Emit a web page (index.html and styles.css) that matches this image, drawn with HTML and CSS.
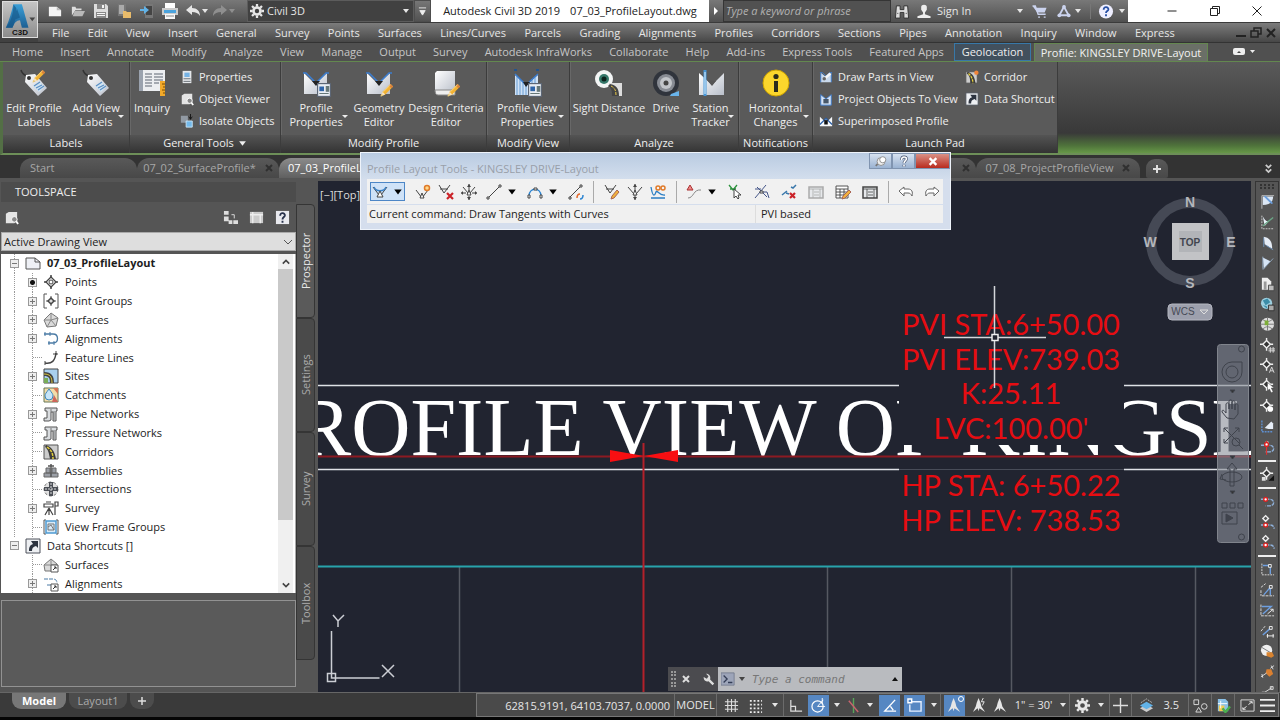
FILE: index.html
```html
<!DOCTYPE html>
<html lang="en">
<head>
<meta charset="utf-8">
<title>Autodesk Civil 3D 2019</title>
<link rel="stylesheet" href="styles.css">
</head>
<body>
<svg class="defs" aria-hidden="true">
  <defs>
    <linearGradient id="gw" x1="0" y1="0" x2="1" y2="1"><stop offset="0" stop-color="#fff"/><stop offset="1" stop-color="#b9bfca"/></linearGradient>
    <linearGradient id="gb" x1="0" y1="0" x2="0" y2="1"><stop offset="0" stop-color="#3ba0d8"/><stop offset="1" stop-color="#1d5f93"/></linearGradient>
  </defs>
  <symbol id="new" viewBox="0 0 16 16"><path d="M1 3h9l5 4v7H1z" fill="#f4f4f4"/><path d="M10 3v4h5" fill="#bbb"/></symbol>
  <symbol id="open" viewBox="0 0 16 16"><path d="M1 13V3h4l1 2h6v2H5z" fill="#ddd"/><path d="M4 8h12l-3 6H2z" fill="#b8b8b8"/></symbol>
  <symbol id="save" viewBox="0 0 16 16"><path d="M1 1h12l2 2v12H1z" fill="#ddd"/><path d="M4 1h8v5H4zM3 9h10v6H3z" fill="#888"/><path d="M9 2h2v3H9zM4 10h8v1H4zM4 12h8v1H4z" fill="#f4f4f4"/></symbol>
  <symbol id="saveas" viewBox="0 0 16 16"><path d="M2 1h8v12H2z" fill="#777"/><path d="M3 2h5v9H3z" fill="#aaa"/><path d="M7 8h3l1 1h4v6H7z" fill="#e8bb6b"/></symbol>
  <symbol id="mobile" viewBox="0 0 16 16"><path d="M6 1h8v14H6z" fill="#777"/><path d="M7 3h6v9H7z" fill="#444"/><path d="M1 6h4V3l5 4-5 4V8H1z" fill="#62b2e6"/></symbol>
  <symbol id="print" viewBox="0 0 16 16"><path d="M3 0h10v5H3z" fill="#fff"/><path d="M0 5h16v7H0z" fill="#ccc"/><path d="M2 7h12v3H2z" fill="#4ba3dd"/><path d="M3 11h10v5H3z" fill="#f7f7f7"/><path d="M4 13h8" stroke="#888"/></symbol>
  <symbol id="undo" viewBox="0 0 16 16"><path d="M1 7l6-5v3c5 0 8 3 8 8-2-3-4-4-8-4v3z" fill="currentColor"/></symbol>
  <symbol id="caret" viewBox="0 0 8 8"><path d="M1 2h6L4 6z" fill="currentColor"/></symbol>
  <symbol id="gear" viewBox="0 0 16 16"><circle cx="8" cy="8" r="4" fill="none" stroke="currentColor" stroke-width="3"/><path d="M8 0v3M8 13v3M0 8h3M13 8h3M2.300 2.300l2 2M11.700 11.700l2 2M2.300 13.700l2-2M11.700 4.300l2-2" stroke="currentColor" stroke-width="2.600"/></symbol>
  <symbol id="tag" viewBox="0 0 28 28"><path d="M1 1c1 4 3 5 6 6" fill="none" stroke="#333" stroke-width="1.500"/><path d="M6 6l9-1 12 14-9 8L5 13z" fill="url(#gw)"/><circle cx="9" cy="9" r="2" fill="#333"/><path d="M13 17l7-4 4 5-5 5z" fill="#cfe3f2"/><path d="M14 17l6-4M16 19l6-3M18 21l6-4" stroke="#5b8fc4" stroke-width="1.200"/></symbol>
  <symbol id="pencil" viewBox="0 0 16 16"><path d="M1 15l2-5 9-9 3 3-9 9z" fill="#f2b233"/><path d="M1 15l2-5 3 3z" fill="#f8e2bb"/><path d="M12 1l3 3-2 2-3-3z" fill="#d9803c"/><path d="M1 15l1-2 1 1zM4 10l8-8" fill="#222" stroke="#fbdc85"/></symbol>
  <symbol id="inquiry" viewBox="0 0 28 28"><rect x="1" y="1" width="26" height="21" fill="#eceef1"/><path d="M1 1h4v21H1z" fill="#9aa2ae"/><path d="M7 5h7M16 5h9M7 8h7M16 8h9M7 11h7M16 11h9M7 14h7M16 14h5M7 17h7" stroke="#5d6572" stroke-width="1.200"/><path d="M22 12h5v15h-5z" fill="#f1a92b"/><path d="M24 15h3M25 18h2M24 21h3M25 24h2" stroke="#7c4c00"/></symbol>
  <symbol id="prof" viewBox="0 0 28 28"><path d="M2 4l11 11L25 4v21H2z" fill="url(#gw)"/><path d="M1 4h3l10 10L24 4h3" fill="none" stroke="#3b7dd0" stroke-width="1.500"/><path d="M10 12l4 5 4-5" fill="#222"/></symbol>
  <symbol id="props" viewBox="0 0 12 12"><rect x=".5" y=".5" width="11" height="11" fill="#e9edf3" stroke="#5c6675"/><path d="M2 3h4v4H2z" fill="#2f64a8"/><path d="M8 3h2v4H8zM2 9h8" fill="#677" stroke="#677"/></symbol>
  <symbol id="profview" viewBox="0 0 28 28"><path d="M2 6l11 10L25 6v20H2z" fill="#cfe1f5"/><path d="M4 8v18M7 10v16M10 13v13M13 16v10M16 13v13M19 10v16M22 8v18" stroke="#8bb4de" stroke-width="1.500"/><path d="M2 5l11 11L25 5" fill="none" stroke="#3b7dd0" stroke-width="1.500"/><path d="M1 1h3M23 1h3" stroke="#23548e" stroke-width="2"/><path d="M10 13l3 5 4-5" fill="#222"/></symbol>
  <symbol id="book" viewBox="0 0 28 28"><path d="M5 2h18v22H6l-3-3V4z" fill="url(#gw)"/><path d="M3 21h20v5H6c-2 0-3-2-3-5z" fill="#eee" stroke="#888"/></symbol>
  <symbol id="eye" viewBox="0 0 28 28"><circle cx="9" cy="10" r="9" fill="#f3f5f5"/><circle cx="9" cy="10" r="5" fill="#36786a"/><circle cx="9" cy="10" r="2.500" fill="#0c211c"/><path d="M14 14l13 0v13h-7c0-5-2-8-6-9z" fill="#ddd"/><path d="M15 15c6 1 9 4 9 12h-7c0-5 0-7-4-10z" fill="#444"/><path d="M16 17c4 2 5 5 5 9" stroke="#e8c847" fill="none" stroke-dasharray="3 1"/></symbol>
  <symbol id="drive" viewBox="0 0 28 28"><circle cx="14" cy="14" r="13" fill="#30343c"/><circle cx="14" cy="14" r="9" fill="#888c94"/><circle cx="14" cy="14" r="6" fill="#c2c5ca"/><circle cx="14" cy="14" r="2.500" fill="#444"/><path d="M19 25l8-3v5h-9z" fill="#69b4eb"/></symbol>
  <symbol id="station" viewBox="0 0 28 28"><path d="M2 4l13 12L27 4v22H2z" fill="url(#gw)"/><path d="M8 1v26" stroke="#4796d8" stroke-width="3"/><path d="M8 3v22" stroke="#e5f5ff"/><path d="M10 11l5 6 4-5" fill="#555"/></symbol>
  <symbol id="info" viewBox="0 0 28 28"><circle cx="14" cy="14" r="13" fill="#fbd62c" stroke="#cfa400"/><circle cx="14" cy="7.500" r="2.600" fill="#2b2b1c"/><path d="M12 12h4v11h-4z" fill="#2b2b1c"/></symbol>
  <symbol id="sprops" viewBox="0 0 16 16"><path d="M3 1h10v14H3z" fill="#e4e7ea"/><path d="M5 3h6v5H5z" fill="#75b2e4"/><path d="M4 10h8M4 13h8" stroke="#5d646c"/></symbol>
  <symbol id="sview" viewBox="0 0 16 16"><path d="M2 4l3-2h9v9l-3 3H2z" fill="#e4e4e4"/><circle cx="11" cy="10" r="3" fill="#888" stroke="#fff"/><path d="M13 12l2 3" stroke="#fff" stroke-width="2"/></symbol>
  <symbol id="siso" viewBox="0 0 16 16"><path d="M1 2h8v8H1z" fill="#929aa3"/><path d="M7 8h7v7H7z" fill="#73b9ea" stroke="#cde8fa"/><path d="M12 0v6M10 3l2 3 2-3" stroke="#111" fill="none"/></symbol>
  <symbol id="sparts" viewBox="0 0 16 16"><path d="M2 3l6 5 6-5v11H2z" fill="#c9d9ec"/><path d="M1 3h3l4 4 4-4h3M2 4v10M14 4v10" stroke="#3b7dd0" fill="none"/><path d="M5 11l8-7" stroke="#f4f4f4" stroke-width="3"/><circle cx="6" cy="10" r="2" fill="#666"/></symbol>
  <symbol id="sproj" viewBox="0 0 16 16"><path d="M2 3l6 5 6-5v12H2z" fill="#d6e3f4" stroke="#3b7dd0"/><path d="M5 8h6v5H5z" fill="#48586a"/></symbol>
  <symbol id="ssup" viewBox="0 0 16 16"><path d="M1 3l5 5 2-3 2 3 5-5v11H1z" fill="#f6f8fa"/><path d="M1 12l7-7 7 7" stroke="#2a5fa8" stroke-width="1.500" fill="none"/><path d="M6 7h4v5H6z" fill="#111"/></symbol>
  <symbol id="road" viewBox="0 0 16 16"><path d="M1 1h14v14H1z" fill="#ccc" stroke="#555"/><path d="M3 1c6 2 9 7 10 14H7C6 9 5 5 2 3z" fill="#3c3c3c"/><path d="M4 3c4 3 6 6 6 12" stroke="#e5cf3a" fill="none" stroke-dasharray="3 1" stroke-width="1.500"/></symbol>
  <symbol id="roadnew" viewBox="0 0 16 16"><path d="M1 2h13v13H1z" fill="#ccc" stroke="#555"/><path d="M3 2c6 2 8 6 9 13H6C6 9 5 6 2 4z" fill="#3c3c3c"/><path d="M4 4c3 3 5 6 5 11" stroke="#e5cf3a" fill="none" stroke-dasharray="3 1" stroke-width="1.500"/><circle cx="13" cy="3" r="2.500" fill="#f0843a"/></symbol>
  <symbol id="shortcut" viewBox="0 0 16 16"><path d="M1 1h14v14H1z" fill="#eef0f3" stroke="#4c515a"/><path d="M6 3h7v7l-2-2c-3 1-4 2-4 5H4c0-4 1-6 4-7z" fill="#2d3440"/></symbol>
  <symbol id="points" viewBox="0 0 16 16"><path d="M8 1v4M8 11v4M1 8h4M11 8h4" stroke="#444" stroke-width="1.500"/><path d="M8 3l5 5-5 5-5-5z" fill="#fff" stroke="#444" stroke-width="1.300"/><circle cx="8" cy="8" r="2" fill="none" stroke="#444"/></symbol>
  <symbol id="pgroup" viewBox="0 0 16 16"><path d="M4 1H1v14h3M12 1h3v14h-3M8 3v10M3 8h10" fill="none" stroke="#555"/><path d="M8 5l3 3-3 3-3-3z" fill="#ddd" stroke="#444" stroke-width="1.500"/></symbol>
  <symbol id="surf" viewBox="0 0 16 16"><path d="M8 1l7 5-2 8-9 1-3-7z" fill="#dadada" stroke="#777"/><path d="M8 1v7l7-2M8 8l5 6M8 8l-4 7M8 8H1" stroke="#888" fill="none"/></symbol>
  <symbol id="align" viewBox="0 0 16 16"><path d="M1 3h9c6 0 6 9 0 9H5" fill="none" stroke="#4b7ba5" stroke-width="1.300"/><path d="M2 1v4M7 1v4M6 10v4M11 10v4" stroke="#4b7ba5"/></symbol>
  <symbol id="feat" viewBox="0 0 16 16"><path d="M2 13c7 1 10-2 11-10" fill="none" stroke="#444" stroke-width="1.500"/><path d="M10 4h5M13 1v4M2 11v4" stroke="#444"/></symbol>
  <symbol id="sites" viewBox="0 0 16 16"><path d="M1 1h14v14H1z" fill="#a9d0ef" stroke="#444"/><path d="M1 4c8 0 10 4 10 11H7c0-5-1-7-6-7z" fill="#444"/><path d="M1 6c6 0 8 3 8 9" fill="none" stroke="#dbc73e"/><path d="M1 10h4v5H1z" fill="#79ad58"/></symbol>
  <symbol id="catch" viewBox="0 0 16 16"><path d="M1 1h14v14H1z" fill="#f3dca9" stroke="#675"/><path d="M10 1h5v6z" fill="#d57656"/><path d="M11 8l4 7h-6z" fill="#ce665b"/><path d="M6 2c3 4 4 5 4 7a4 4 0 0 1-8 0c0-2 1-3 4-7z" fill="#c6e5f8" stroke="#3b86bd"/></symbol>
  <symbol id="pipe" viewBox="0 0 16 16"><path d="M2 2h12v3h-1v10h-3V6H8v8l-2 1H1v-3h3V5H2z" fill="#d9dcdf" stroke="#555"/><path d="M8 3v3M11 5v9" stroke="#777"/></symbol>
  <symbol id="assembly" viewBox="0 0 16 16"><path d="M1 10h14v4H1zM3 5h4v5H3zM9 5h4v5H9z" fill="#9b9fa6" stroke="#666"/><path d="M8 1v13M5 3h6" stroke="#555" stroke-width="1.500"/></symbol>
  <symbol id="cross" viewBox="0 0 16 16"><circle cx="8" cy="8" r="7" fill="#e0e0e0" stroke="#777" stroke-dasharray="3 2"/><path d="M6 1h4v5h5v4h-5v5H6v-5H1V6h5z" fill="#4b4f56"/><path d="M8 2v12M2 8h12" stroke="#ddd" stroke-dasharray="2 1"/></symbol>
  <symbol id="survey" viewBox="0 0 16 16"><path d="M1 4h9v3H1zM6 8l-4 7M6 8v7M6 8l4 7M12 2h3v4h-3zM12 6v9M3 2h5" fill="none" stroke="#444" stroke-width="1.200"/></symbol>
  <symbol id="frame" viewBox="0 0 16 16"><path d="M3 1H1v14h2M13 1h2v14h-2" fill="none" stroke="#555"/><path d="M3 2h10v12H3z" fill="#d8eaf7" stroke="#4d9ad2" stroke-width="1.500"/><path d="M5 5h6v6H5zM5 8l3-2 3 5" fill="none" stroke="#777"/></symbol>
  <symbol id="doc" viewBox="0 0 16 16"><path d="M1 3h9l5 4v7H1z" fill="#eef0f5" stroke="#555"/><path d="M10 3v4h5" fill="none" stroke="#555"/></symbol>
  <symbol id="surfs" viewBox="0 0 16 16"><path d="M1 8l7-6 6 5v7H2z" fill="#dadada" stroke="#777"/><path d="M8 2v6M1 8h13" stroke="#888"/><path d="M8 8h7v7H8z" fill="#fff" stroke="#555"/><path d="M10 13l3-3M11 10h2v2" stroke="#333" fill="none"/></symbol>
  <symbol id="aligns" viewBox="0 0 16 16"><path d="M1 3h9c3 0 4 2 4 4M4 9h4" fill="none" stroke="#4b7ba5" stroke-dasharray="4 1"/><path d="M8 8h7v7H8z" fill="#fff" stroke="#555"/><path d="M10 13l3-3M11 10h2v2" stroke="#333" fill="none"/></symbol>
  <!-- profile layout tool icons -->
  <symbol id="x" viewBox="0 0 8 8"><path d="M1 1l6 6M7 1L1 7" stroke="currentColor" stroke-width="2"/></symbol>
  <symbol id="veec" viewBox="0 0 16 16"><path d="M1 3l6 8 2 0 6-8" fill="none" stroke="#444"/><path d="M2 3c2 5 10 5 12 0" fill="none" stroke="#3a80c5" stroke-width="1.500"/><path d="M8 7l3 6H5z" fill="#fff" stroke="#444"/></symbol>
  <symbol id="veemove" viewBox="0 0 16 16"><path d="M2 3l5 6h2l5-6M8 0v6M8 12v4M0 9h5M11 9h5" fill="none" stroke="#444"/><path d="M8 6l2 5H6z" fill="#fff" stroke="#444"/><path d="M6 3l2-3 2 3zM6 13l2 3 2-3zM2 7v4L0 9zM14 7v4l2-2z" fill="#444"/></symbol>
  <symbol id="line" viewBox="0 0 16 16"><path d="M2 14L14 2" stroke="#444"/><path d="M1 13h2v2H1zM13 1h2v2h-2z" fill="#fff" stroke="#444"/></symbol>
  <symbol id="arc" viewBox="0 0 16 16"><path d="M2 12C2 3 14 3 14 12" fill="none" stroke="#2b84d1" stroke-width="1.500"/><path d="M1 11h2v3H1zM13 11h2v3h-2zM7 4h3v2H7z" fill="#fff" stroke="#444"/></symbol>
  <symbol id="linec" viewBox="0 0 16 16"><path d="M1 14L14 1" stroke="#444"/><path d="M1 13h2v2H1zM12 1h2v2h-2z" fill="#fff" stroke="#444"/><path d="M9 14c0-3 1-4 3-4" stroke="#e46a2d" stroke-width="1.500" fill="none"/><path d="M12 15c3 0 3-2 3-4" stroke="#2b84d1" stroke-width="1.500" fill="none"/></symbol>
  <symbol id="wave" viewBox="0 0 16 16"><path d="M1 3c2 12 4 8 5 5s3 4 9 3M1 14h14" fill="none" stroke="#2b7ec4" stroke-width="1.300"/><circle cx="8" cy="4" r="2" fill="none" stroke="#e07a29" stroke-width="1.500"/><circle cx="13" cy="4" r="2" fill="none" stroke="#e07a29" stroke-width="1.500"/></symbol>
  <symbol id="tri" viewBox="0 0 16 16"><path d="M4 1l3 5H1z" fill="#e88" stroke="#a33"/><path d="M2 14C8 14 7 5 15 6" fill="none" stroke="#888"/></symbol>
  <symbol id="pick" viewBox="0 0 16 16"><path d="M2 1l4 5 4-5M3 5h6" fill="none" stroke="#2b923c" stroke-width="1.300"/><path d="M7 5v9l2-2 2 3 1-1-1-3h3z" fill="#fff" stroke="#444"/></symbol>
  <symbol id="split" viewBox="0 0 16 16"><path d="M1 14L12 1M1 5h6M6 8h7l2 6M3 3l10 10" fill="none" stroke="#458"/><path d="M6 7h3v2H6z" fill="#fff" stroke="#444"/></symbol>
  <symbol id="delx" viewBox="0 0 16 16"><path d="M1 11l5-4M10 3l2 1 3-3M5 9l3 1" fill="none" stroke="#3a78ab" stroke-width="1.500"/><path d="M9 9l5 5M14 9l-5 5" stroke="#cb2228" stroke-width="2.200"/></symbol>
  <symbol id="panel" viewBox="0 0 16 16"><path d="M1 3h14v11H1z" fill="#e7e9ec" stroke="currentColor" stroke-width="1.500"/><path d="M1 5h14M12 5v9M5 5v9M6 8h5M6 11h5" fill="none" stroke="currentColor" stroke-width=".8"/></symbol>
  <symbol id="table" viewBox="0 0 16 16"><path d="M1 2h12v12H1zM1 5h12M5 5v9M9 5v9M1 8h12M1 11h12" fill="#fff" stroke="#444" stroke-width=".9"/><path d="M7 15l1-3 6-6 2 2-6 6z" fill="#f1b13b" stroke="#a65"/></symbol>
  <symbol id="undoo" viewBox="0 0 16 16"><path d="M1 7l5-4v2h4c4 0 5 3 4 7-1-2-2-3-4-3H6v3z" fill="#fff" stroke="#666"/></symbol>
  <!-- civil side bar icons -->
  <symbol id="r1" viewBox="0 0 16 16"><path d="M2 1h13M2 1v14" stroke="#bbb"/><path d="M3 2h11c0 6-4 9-11 9z" fill="#dce7f4"/><path d="M4 2l8 8 2-1-8-8z" fill="#6b9edb"/></symbol>
  <symbol id="r2" viewBox="0 0 16 16"><path d="M2 1v14h13" stroke="#ccc" fill="none" stroke-dasharray="2 1"/><path d="M3 2c3 6 6 6 8 3l-6 7z" fill="#e9f1fa"/><path d="M3 12L14 3" stroke="#6ca787" stroke-width="1.500"/></symbol>
  <symbol id="r3" viewBox="0 0 16 16"><path d="M4 1c7 1 9 6 9 13L5 9z" fill="#e6ecf5"/><path d="M4 2v10M6 10l8 5" stroke="#6f93bb"/></symbol>
  <symbol id="r4" viewBox="0 0 16 16"><path d="M3 2l8 4-7 8z" fill="#d6e5f6"/><path d="M3 15L14 3M3 1v13" stroke="#91a7bf"/></symbol>
  <symbol id="r5" viewBox="0 0 16 16"><path d="M2 1h6l4 4v9H2z" fill="#eee"/><path d="M4 5h3v9H4z" fill="#999"/><path d="M9 9h6v6H9z" fill="#bbb" stroke="#444"/></symbol>
  <symbol id="r6" viewBox="0 0 16 16"><circle cx="7" cy="7" r="6" fill="#9dcfdf"/><path d="M3 4l5-2 3 4-5 3zM3 9l4 1 1 3" fill="#3c8da8"/><path d="M9 9h6v6H9z" fill="#aaa" stroke="#333"/></symbol>
  <symbol id="r7" viewBox="0 0 16 16"><circle cx="8" cy="8" r="7" fill="#dedede"/><path d="M8 1v14M1 8h14M3 3c4 3 6 3 10 0M3 13c4-3 6-3 10 0" stroke="#777" fill="none"/><path d="M5 4h4v5H5z" fill="#7eae38"/></symbol>
  <symbol id="rp" viewBox="0 0 16 16"><path d="M7 0v3M7 11v3M0 7h3M11 7h3" stroke="#eee" stroke-width="1.500"/><path d="M7 3l4 4-4 4-4-4z" fill="#333" stroke="#eee" stroke-width="1.500"/></symbol>
  <symbol id="rpn" viewBox="0 0 16 16"><use href="#rp"/><path d="M11 10v6M14 10v6M9 12h7M9 14h7" stroke="#ddd"/></symbol>
  <symbol id="rpa" viewBox="0 0 16 16"><use href="#rp"/><path d="M10 16l2.500-6 2.500 6M11 14h3" stroke="#ddd" fill="none"/></symbol>
  <symbol id="rpc" viewBox="0 0 16 16"><use href="#rp"/><path d="M8 5v9l2-2 2 4 2-1-2-4h3z" fill="#fff" stroke="#444" stroke-width=".5"/></symbol>
  <symbol id="rpb" viewBox="0 0 16 16"><use href="#rp"/><circle cx="11" cy="11" r="3" fill="#fff"/></symbol>
  <symbol id="rpd" viewBox="0 0 16 16"><use href="#rp"/><path d="M2 11h4v4H2z" fill="#ddd"/><path d="M15 9v6H9z" fill="#111"/></symbol>
  <symbol id="rq" viewBox="0 0 16 16"><path d="M2 2v12h12" fill="none" stroke="#5e8fd0" stroke-dasharray="2 1" stroke-width="1.500"/><path d="M5 10l7-7 2 2v6H9z" fill="#e7eef8"/></symbol>
  <symbol id="rred" viewBox="0 0 16 16"><path d="M1 6h9c6 0 6 7 0 7H6" fill="none" stroke="#8fb1da" stroke-width="1.500" stroke-dasharray="4 1"/><path d="M6 2h3v3H6z" fill="#fff"/><path d="M7 1v3M7 7v9" stroke="#d33" stroke-width="1.300"/><circle cx="7" cy="5" r="2" fill="#fff" stroke="#d22" stroke-width="1.500"/></symbol>
  <symbol id="rcurve" viewBox="0 0 16 16"><path d="M1 6h9c6 0 6 7 0 7H6" fill="none" stroke="#8fb1da" stroke-width="1.500" stroke-dasharray="4 1"/><circle cx="6" cy="6" r="2" fill="#fff" stroke="#d22" stroke-width="1.500"/></symbol>
  <symbol id="rcurvep" viewBox="0 0 16 16"><path d="M1 11h9c3 0 5 1 5 4" fill="none" stroke="#8fb1da" stroke-width="1.500" stroke-dasharray="4 1"/><path d="M6 1l3 3-3 3-3-3z" fill="#555" stroke="#eee" stroke-width="1.500"/><circle cx="6" cy="11" r="2" fill="#fff" stroke="#d22" stroke-width="1.500"/></symbol>
  <symbol id="rbox" viewBox="0 0 16 16"><path d="M2 2v12h13" fill="none" stroke="#ddd" stroke-dasharray="2 1"/><path d="M3 4h8v9" fill="none" stroke="#6e9fe0" stroke-width="1.500"/><path d="M9 3h3v3H9z" fill="#555" stroke="#eee"/></symbol>
  <symbol id="rdiag" viewBox="0 0 16 16"><path d="M1 5l5-4M2 14h13M1 8v6" stroke="#ddd" stroke-dasharray="3 1" fill="none"/><path d="M4 13l7-8v8" fill="none" stroke="#6e9fe0" stroke-width="1.500"/><path d="M10 3h3v3h-3z" fill="#555" stroke="#eee"/></symbol>
  <symbol id="rdiag2" viewBox="0 0 16 16"><path d="M1 2v12h14" stroke="#ddd" stroke-dasharray="3 1" fill="none"/><path d="M2 4h10L3 12" fill="none" stroke="#6e9fe0" stroke-width="1.500"/><path d="M8 12l6-5M11 7h3v3" fill="none" stroke="#eee"/></symbol>
  <symbol id="rdiag3" viewBox="0 0 16 16"><path d="M1 8l5-6" stroke="#ddd" stroke-dasharray="3 1"/><path d="M3 12l8-7" stroke="#6e9fe0" stroke-width="1.500"/><path d="M10 3h3v3h-3z" fill="#555" stroke="#eee"/><path d="M7 13h8M8 11v4M14 11v4" stroke="#eee"/></symbol>
  <symbol id="rball" viewBox="0 0 16 16"><circle cx="7" cy="7" r="6" fill="#eee"/><path d="M2 4l10 6" stroke="#777"/><path d="M7 9h6l2 4-3 2-5-2z" fill="#d98430"/></symbol>
  <symbol id="ror" viewBox="0 0 16 16"><path d="M7 6h5l2 5-4 3-4-4z" fill="#db8030"/><path d="M1 14l6-4M11 5l4-3M2 11l1 4M12 2l2 4" stroke="#ddd" fill="none"/></symbol>
  <symbol id="rend" viewBox="0 0 16 16"><path d="M2 10L13 3M2 8h3v3H2zM11 2h3v3h-3z" stroke="#ddd" fill="none"/></symbol>
  <!-- status bar icons -->
  <symbol id="grid" viewBox="0 0 16 16"><path d="M4 1v14M8 1v14M12 1v14M1 4h14M1 8h14M1 12h14" stroke="#ddd" stroke-width="1.200"/></symbol>
  <symbol id="dots" viewBox="0 0 16 16"><path d="M2 3h13M2 7h13M2 11h13M2 15h13" stroke="#eee" stroke-width="2" stroke-dasharray="2 2"/></symbol>
  <symbol id="ortho" viewBox="0 0 16 16"><path d="M3 2v12h12M3 9h5v5" fill="none" stroke="#ddd" stroke-width="1.300"/></symbol>
  <symbol id="polar" viewBox="0 0 16 16"><circle cx="7" cy="9" r="6" fill="none" stroke="#fff" stroke-width="1.300"/><path d="M7 9l6-7M7 9h8M12 0v6" stroke="#fff" fill="none"/></symbol>
  <symbol id="iso" viewBox="0 0 16 16"><path d="M8 0v16" stroke="#58a55b" stroke-width="1.500"/><path d="M3 3l10 12" stroke="#c8636e" stroke-width="1.500"/></symbol>
  <symbol id="angle" viewBox="0 0 16 16"><path d="M14 2L3 14h12M9 9l3 4" fill="none" stroke="#fff" stroke-width="1.500"/></symbol>
  <symbol id="osnap" viewBox="0 0 16 16"><path d="M5 4h10v10H3V7" fill="none" stroke="#e5f0ff" stroke-width="1.500"/><path d="M1 1h4v4H1z" fill="none" stroke="#fff" stroke-width="1.500"/></symbol>
  <symbol id="anno" viewBox="0 0 16 16"><path d="M7 0l2 5 1 4 4 6-6-4-1 3-1-3-5 4 3-6 1-4z" fill="currentColor"/></symbol>
  <symbol id="layers" viewBox="0 0 16 16"><path d="M1 11l7-4 7 4-7 4z" fill="#ccc"/><path d="M1 8l7-4 7 4-7 4z" fill="#62b3e9"/><path d="M2 5l6-4 6 4" fill="none" stroke="#bbb" stroke-dasharray="2 1"/></symbol>
  <symbol id="shapes" viewBox="0 0 16 16"><path d="M1 2h5v5H1zM6 10l3 5H3z" fill="none" stroke="#ddd"/><circle cx="12" cy="9" r="3" fill="none" stroke="#ddd"/></symbol>
  <symbol id="hw" viewBox="0 0 16 16"><path d="M2 1h8l3 3v10H2z" fill="#8bc1e8"/><path d="M3 8h6v6H3z" fill="#f2cb55"/><path d="M5 3v8M2 6h10" stroke="#fff"/><path d="M7 11l3 4 5-6" fill="none" stroke="#4baf4f" stroke-width="2.500"/></symbol>
  <symbol id="full" viewBox="0 0 16 16"><path d="M1 2h14v12H1z" fill="none" stroke="#ddd"/><path d="M9 7l4-3M10 4h3v2M7 9l-4 3M3 10v2h3" stroke="#eee" fill="none"/></symbol>
  <symbol id="helpbox" viewBox="0 0 16 16"><path d="M1 1h14v14H1z" fill="#e8e9ee"/><path d="M5.500 6c0-4 5.500-3 5 0-.3 1.500-2.500 1.500-2.500 4M8 11.500v2" fill="none" stroke="#26304a" stroke-width="2"/></symbol>
</svg>

<header class="top">
  <button class="app" aria-label="Application menu"><svg viewBox="0 0 36 28"><path d="M3 27C7 18 9 10 11 2h9l7 25h-7l-2-8c-4 0-6 3-8 8z" fill="url(#gb)"/><path d="M15 7l-4 12 7-3zM11 2c0 9-2 18-8 25h7c3-7 5-15 4-21z" fill="#155788" opacity=".65"/><path d="M28 16h6l-3 4z" fill="#444"/></svg><b>C3D</b></button>
  <div class="titlebar">
    <div class="quick">
      <button aria-label="New"><svg><use href="#new"/></svg></button><button aria-label="Open"><svg><use href="#open"/></svg></button><button aria-label="Save"><svg><use href="#save"/></svg></button><button aria-label="Save As"><svg><use href="#saveas"/></svg></button><button aria-label="Mobile"><svg><use href="#mobile"/></svg></button><button aria-label="Plot"><svg><use href="#print"/></svg></button><button aria-label="Undo"><svg><use href="#undo"/></svg><svg class="c"><use href="#caret"/></svg></button><button aria-label="Redo" class="dim"><svg class="flip"><use href="#undo"/></svg><svg class="c"><use href="#caret"/></svg></button>
    </div>
    <button class="workspace"><svg><use href="#gear"/></svg><span>Civil 3D</span><svg class="c"><use href="#caret"/></svg></button>
    <button class="custom" aria-label="Customize"><svg viewBox="0 0 10 12"><path d="M1 2h8M2 5h6l-3 5z" stroke="#eee" fill="#eee"/></svg></button>
    <h1><span>Autodesk Civil 3D 2019</span><span>07_03_ProfileLayout.dwg</span></h1>
    <button class="expand" aria-label="Expand"><svg viewBox="0 0 8 10"><path d="M2 1l4 4-4 4z" fill="#fff"/></svg></button>
    <input class="search" aria-label="Search" placeholder="Type a keyword or phrase">
    <div class="account">
      <button aria-label="Find"><svg viewBox="0 0 16 16"><path d="M2 2h4v4h4V2h4l1 13h-5V9H6v6H1z" fill="#ddd" stroke="#333"/><path d="M3 10h1M12 10h1" stroke="#333"/></svg></button>
      <button class="sign"><svg viewBox="0 0 16 16"><path d="M5 3c0-3 6-3 6 0v3L9 9v2l6 2v2H1v-2l6-2V9L5 6z" fill="#eee"/></svg><span>Sign In</span><svg class="c"><use href="#caret"/></svg></button>
      <button aria-label="Store"><svg viewBox="0 0 16 16"><path d="M0 2h3l1 2h11l-2 5H5z" fill="#cbd3ee"/><path d="M0 2h3l3 9h8M6 14h2M12 14h2" fill="none" stroke="#cbd3ee" stroke-width="1.500"/></svg></button>
      <button aria-label="Apps"><svg viewBox="0 0 16 16"><path d="M8 3L3 12h10z" fill="none" stroke="#cbd3ee" stroke-width="2"/><circle cx="8" cy="3" r="2" fill="#cbd3ee"/><circle cx="3" cy="12" r="2" fill="#cbd3ee"/><circle cx="13" cy="12" r="2" fill="#cbd3ee"/></svg><svg class="c"><use href="#caret"/></svg></button>
      <button aria-label="Help" class="help"><svg viewBox="0 0 16 16"><circle cx="8" cy="8" r="7.500" fill="#eef"/><path d="M5.500 6c0-4 5.500-3 5 0-.3 1.500-2.500 1.500-2.500 3.500M8 11v2" fill="none" stroke="#2850a4" stroke-width="2"/></svg><svg class="c"><use href="#caret"/></svg></button>
    </div>
    <div class="winctl"><button aria-label="Minimize"><svg viewBox="0 0 12 12"><path d="M1.500 6h9" stroke="#222"/></svg></button><button aria-label="Restore"><svg viewBox="0 0 12 12"><path d="M1.500 3.500h7v7h-7zM3.500 3V1.500h7v7H9" fill="none" stroke="#222"/></svg></button><button aria-label="Close"><svg viewBox="0 0 12 12"><path d="M1.500 1.500l9 9M10.500 1.500l-9 9" stroke="#222"/></svg></button></div>
  </div>
  <nav class="menubar">
    <div class="menus"><button>File</button><button>Edit</button><button>View</button><button>Insert</button><button>General</button><button>Survey</button><button>Points</button><button>Surfaces</button><button>Lines/Curves</button><button>Parcels</button><button>Grading</button><button>Alignments</button><button>Profiles</button><button>Corridors</button><button>Sections</button><button>Pipes</button><button>Annotation</button><button>Inquiry</button><button>Window</button><button>Express</button></div>
    <div class="docctl"><button aria-label="Minimize drawing"><svg viewBox="0 0 12 12"><path d="M1 9h10" stroke="#222" stroke-width="2"/></svg></button><button aria-label="Restore drawing"><svg viewBox="0 0 12 12"><path d="M1 4h7v6H1zM4 4V1h7v6H8" fill="none" stroke="#222" stroke-width="1.500"/></svg></button><button aria-label="Close drawing"><svg viewBox="0 0 12 12"><path d="M2 2l8 8M10 2l-8 8" stroke="#222" stroke-width="2"/></svg></button></div>
  </nav>
</header>

<nav class="rtabs">
  <div class="rlist"><button>Home</button><button>Insert</button><button>Annotate</button><button>Modify</button><button>Analyze</button><button>View</button><button>Manage</button><button>Output</button><button>Survey</button><button>Autodesk InfraWorks</button><button>Collaborate</button><button>Help</button><button>Add-ins</button><button>Express Tools</button><button>Featured Apps</button></div>
  <button class="geo">Geolocation</button><button class="current">Profile: KINGSLEY DRIVE-Layout</button>
  <button class="rmin" aria-label="Minimize ribbon"><svg viewBox="0 0 24 10"><rect x="1" y="1" width="12" height="7" rx="2" fill="#eee"/><path d="M5 6l2-2 2 2z" fill="#444"/><path d="M18 3h5l-2.500 3z" fill="#eee"/></svg></button>
</nav>

<section class="ribbon">
  <div class="panel p-labels"><div class="tools"><button class="big"><span class="ic"><svg><use href="#tag"/></svg><svg class="sub up"><use href="#pencil"/></svg></span>Edit Profile<br>Labels</button><button class="big drop"><span class="ic"><svg><use href="#tag"/></svg></span>Add View<br>Labels</button></div><h2>Labels</h2></div>
  <div class="panel p-general"><div class="tools"><button class="big"><span class="ic"><svg><use href="#inquiry"/></svg></span>Inquiry</button><div class="small"><button><svg><use href="#sprops"/></svg>Properties</button><button><svg><use href="#sview"/></svg>Object Viewer</button><button><svg><use href="#siso"/></svg>Isolate Objects</button></div></div><h2>General Tools <svg class="c"><use href="#caret"/></svg></h2></div>
  <div class="panel p-modify"><div class="tools"><button class="big drop"><span class="ic"><svg><use href="#prof"/></svg><svg class="sub"><use href="#props"/></svg></span>Profile<br>Properties</button><button class="big"><span class="ic"><svg><use href="#prof"/></svg><svg class="sub"><use href="#pencil"/></svg></span>Geometry<br>Editor</button><button class="big"><span class="ic"><svg><use href="#book"/></svg><svg class="sub"><use href="#pencil"/></svg></span>Design Criteria<br>Editor</button></div><h2>Modify Profile</h2></div>
  <div class="panel p-view"><div class="tools"><button class="big drop"><span class="ic"><svg><use href="#profview"/></svg><svg class="sub"><use href="#props"/></svg></span>Profile View<br>Properties</button></div><h2>Modify View</h2></div>
  <div class="panel p-analyze"><div class="tools"><button class="big"><span class="ic"><svg><use href="#eye"/></svg></span>Sight Distance</button><button class="big"><span class="ic"><svg><use href="#drive"/></svg></span>Drive</button><button class="big drop"><span class="ic"><svg><use href="#station"/></svg></span>Station<br>Tracker</button></div><h2>Analyze</h2></div>
  <div class="panel p-notify"><div class="tools"><button class="big drop"><span class="ic"><svg><use href="#info"/></svg></span>Horizontal<br>Changes</button></div><h2>Notifications</h2></div>
  <div class="panel p-launch"><div class="tools"><div class="small"><button><svg><use href="#sparts"/></svg>Draw Parts in View</button><button><svg><use href="#sproj"/></svg>Project Objects To View</button><button><svg><use href="#ssup"/></svg>Superimposed Profile</button></div><div class="small"><button><svg><use href="#roadnew"/></svg>Corridor</button><button><svg><use href="#shortcut"/></svg>Data Shortcut</button></div></div><h2>Launch Pad</h2></div>
  <div class="rest"></div>
</section>

<nav class="ftabs">
  <button class="ft start">Start</button><button class="ft surface">07_02_SurfaceProfile*<svg><use href="#x"/></svg></button><button class="ft active">07_03_ProfileLayout*</button><button class="ft hiddenname" aria-label="Drawing"><svg><use href="#x"/></svg></button><button class="ft project">07_08_ProjectProfileView<svg><use href="#x"/></svg></button><button class="ft plus" aria-label="New tab"><svg viewBox="0 0 8 8"><path d="M4 0v8M0 4h8" stroke="#ddd" stroke-width="2"/></svg></button>
  <button class="more" aria-label="More drawings"><svg viewBox="0 0 10 12"><path d="M2 2l3 3 3-3M2 7l3 3 3-3" fill="none" stroke="#ccc" stroke-width="2"/></svg></button>
</nav>

<main>
  <aside class="space">
    <div class="sbody">
      <h2>TOOLSPACE</h2>
      <div class="stools"><button aria-label="Item view"><svg><use href="#sview"/></svg></button><button aria-label="Tree"><svg viewBox="0 0 16 16"><path d="M1 1h5v4H1zM1 7h5v5H1zM6 11h4v4H6zM11 11h5v4h-5z" fill="#ddd"/><path d="M9 5h3v4" fill="none" stroke="#ddd"/></svg></button><button aria-label="Panorama"><svg viewBox="0 0 16 16"><path d="M1 2h14v12H1z" fill="#ccc"/><path d="M4 2v12M1 5h14M12 5v9" stroke="#eee" stroke-width="1.500"/></svg></button><button aria-label="Help"><svg><use href="#helpbox"/></svg></button></div>
      <div class="pick"><select aria-label="Drawing view"><option>Active Drawing View</option></select><svg viewBox="0 0 10 10"><path d="M1 3l4 4 4-4" fill="none" stroke="#555"/></svg></div>
      <div class="treebox">
        <ul class="tree">
          <li class="root"><button class="ex minus" aria-label="Collapse"></button><svg><use href="#doc"/></svg><b>07_03_ProfileLayout</b></li>
          <li><button class="ex dot" aria-label="Expand"></button><svg><use href="#points"/></svg>Points</li>
          <li><button class="ex" aria-label="Expand"></button><svg><use href="#pgroup"/></svg>Point Groups</li>
          <li><button class="ex" aria-label="Expand"></button><svg><use href="#surf"/></svg>Surfaces</li>
          <li><button class="ex" aria-label="Expand"></button><svg><use href="#align"/></svg>Alignments</li>
          <li><i></i><svg><use href="#feat"/></svg>Feature Lines</li>
          <li><button class="ex" aria-label="Expand"></button><svg><use href="#sites"/></svg>Sites</li>
          <li><i></i><svg><use href="#catch"/></svg>Catchments</li>
          <li><button class="ex" aria-label="Expand"></button><svg><use href="#pipe"/></svg>Pipe Networks</li>
          <li><i></i><svg><use href="#pipe"/></svg>Pressure Networks</li>
          <li><i></i><svg><use href="#road"/></svg>Corridors</li>
          <li><button class="ex" aria-label="Expand"></button><svg><use href="#assembly"/></svg>Assemblies</li>
          <li><i></i><svg><use href="#cross"/></svg>Intersections</li>
          <li><button class="ex" aria-label="Expand"></button><svg><use href="#survey"/></svg>Survey</li>
          <li><i></i><svg><use href="#frame"/></svg>View Frame Groups</li>
          <li class="root"><button class="ex minus" aria-label="Collapse"></button><svg><use href="#shortcut"/></svg>Data Shortcuts []</li>
          <li><i></i><svg><use href="#surfs"/></svg>Surfaces</li>
          <li><button class="ex" aria-label="Expand"></button><svg><use href="#aligns"/></svg>Alignments</li>
        </ul>
        <div class="scroll"><svg viewBox="0 0 10 10"><path d="M1 7l4-4 4 4" fill="none" stroke="#444" stroke-width="2"/></svg><span></span><svg viewBox="0 0 10 10"><path d="M1 3l4 4 4-4" fill="none" stroke="#444" stroke-width="2"/></svg></div>
      </div>
      <div class="preview"></div>
    </div>
    <nav class="stabs"><button class="on">Prospector</button><button>Settings</button><button>Survey</button><button>Toolbox</button></nav>
  </aside>

  <div class="canvas">
    <svg class="drawing">
      <g transform="translate(-318 -181)">
        <text x="320" y="199" class="vp">[−][Top]</text>
        <path d="M318 385.500h940M318 469.500h940" stroke="#dfe1e6" stroke-width="1.500"/>
        <text x="251" y="455" class="title">PROFILE VIEW OF KINGSLEY</text>
        <path d="M899 380h225v65H899zM899 468h225v4H899z" fill="#212430"/>
        <path d="M899 469.500h225" stroke="#484c58"/>
        <path d="M318 456.500h940" stroke="#8c1a22" stroke-width="2"/>
        <path d="M459.500 567v130M827.500 567v130M1011.500 567v130M1195.500 567v130" stroke="#565962" stroke-width="1.500"/>
        <path d="M318 566.500h940" stroke="#28a3ab" stroke-width="2"/>
        <path d="M643.500 443v254" stroke="#b3212a" stroke-width="2"/>
        <path d="M610 450l34 6 34-6v12l-34-6-34 6z" fill="#f80f12"/>
        <g class="label"><text x="1011" y="335">PVI STA:6+50.00</text><text x="1011" y="370">PVI ELEV:739.03</text><text x="1011" y="404">K:25.11</text><text x="1011" y="439">LVC:100.00'</text><text x="1011" y="496">HP STA: 6+50.22</text><text x="1011" y="531">HP ELEV: 738.53</text></g>
        <path d="M944 337.500h48M998 337.500h48M994.500 286v48M994.500 340v48" stroke="#d4d6da" stroke-width="1.500"/><path d="M992 334.500h6v6h-6z" fill="none" stroke="#eee" stroke-width="1.500"/>
        <path d="M331.500 631v47h48M327.500 673.500h8v8h-8z" fill="none" stroke="#ccced4" stroke-width="1.500"/>
        <path d="M333 615l5 6 6-6M338 621v6M382 665l12 12M394 665l-12 12" fill="none" stroke="#ccced4" stroke-width="1.500"/>
        <circle cx="1190" cy="242" r="39" fill="none" stroke="#454955" stroke-width="10"/>
        <path d="M1172 223h37v37h-37z" fill="#c2c3c6"/><path d="M1179 231h23v21h-23z" fill="#b2b4b8"/>
        <text x="1190" y="246" class="cube">TOP</text>
        <g class="compass"><text x="1190" y="207">N</text><text x="1150" y="247">W</text><text x="1231" y="247">E</text><text x="1190" y="288">S</text></g>
        <rect x="1168" y="304" width="44" height="16" rx="4" fill="#9da0ad" stroke="#b5b7c0"/><text x="1183" y="315" class="wcs">WCS</text><path d="M1200 310h8l-4 4z" fill="none" stroke="#ddd"/>
        <g fill="none" stroke="#3f434c"><rect x="1217.500" y="344.500" width="31" height="198" rx="3" fill="#8b8f99" fill-opacity=".62" stroke="#80848c"/>
        <circle cx="1241.500" cy="349" r="3"/><path d="M1232 362h10v10a10 10 0 1 1-10-10z"/><circle cx="1232" cy="372" r="6"/><path d="M1230 390h5l-2.500 3zM1230 456h5l-2.500 3zM1230 491h5l-2.500 3z" fill="#333"/>
        <path d="M1227 418l-5-6c0-3 2-2 4 1v-9c1-2 3-1 3 0v5-8c1-2 3-1 3 0v8-7c1-2 3-1 3 0v8-5c1-2 3-1 3 0v9l-4 5z"/>
        <path d="M1224 428l15 15M1224 443l15-15M1224 432v-4h4M1235 428h4v4M1224 439v4h4"/><circle cx="1236" cy="442" r="4"/><path d="M1239 445l4 4"/>
        <ellipse cx="1232" cy="477" rx="10" ry="5"/><path d="M1230 486v-17h-3l5-6 5 6h-3v17zM1222 474l-2 5 6 1"/>
        <path d="M1222 503h5v5h-5zM1230 503h5v5h-5zM1238 503h5v5h-5zM1222 512h15v12h-15z"/><path d="M1226 514l7 4-7 4z" fill="#3f434c"/><circle cx="1241.500" cy="537" r="3"/></g>
      </g>
    </svg>
    <form class="cmd"><span class="grip"></span><button type="button" aria-label="Close"><svg><use href="#x"/></svg></button><button type="button" aria-label="Customize"><svg class="wr" viewBox="0 0 16 16"><path d="M5 1l3 3-2 3-4-2c0 5 3 6 6 5l5 5 2-2-5-5c1-4-1-7-5-7z" fill="#ddd"/></svg></button><span class="entry"><svg class="prompt" viewBox="0 0 16 16"><path d="M0 1h15v14H0z" fill="#9da5b9" stroke="#737b8e"/><path d="M3 4l4 4-4 4M8 12h5" fill="none" stroke="#333d55" stroke-width="1.500"/></svg><svg class="c"><use href="#caret"/></svg><input aria-label="Command" placeholder="Type a command"><svg class="c upc"><use href="#caret"/></svg></span></form>
  </div>

  <div class="side">
    <span class="grip2"></span>
    <svg><use href="#r1"/></svg><svg><use href="#r2"/></svg><svg><use href="#r3"/></svg><svg><use href="#r4"/></svg><svg><use href="#r5"/></svg><svg><use href="#r6"/></svg><svg><use href="#r7"/></svg><svg><use href="#rpn"/></svg><svg><use href="#rpa"/></svg><svg><use href="#rpc"/></svg><svg><use href="#rpb"/></svg><svg><use href="#rq"/></svg><svg><use href="#rred"/></svg><hr><svg><use href="#rpd"/></svg><hr><svg><use href="#rcurve"/></svg><svg><use href="#rcurvep"/></svg><svg><use href="#rcurvep"/></svg><hr><svg><use href="#rbox"/></svg><svg><use href="#rdiag"/></svg><svg><use href="#rdiag2"/></svg><svg><use href="#rdiag3"/></svg><svg><use href="#rball"/></svg><svg><use href="#ror"/></svg><svg><use href="#rend"/></svg>
  </div>
</main>

<footer>
  <nav class="models"><button class="on">Model</button><button>Layout1</button><button aria-label="New layout"><svg viewBox="0 0 8 8"><path d="M4 0v8M0 4h8" stroke="#ddd" stroke-width="1.500"/></svg></button></nav>
  <div class="status">
    <span class="coords">62815.9191, 64103.7037, 0.0000</span>
    <button class="model">MODEL</button>
    <div class="grp g1"><button aria-label="Grid"><svg><use href="#grid"/></svg></button><button aria-label="Snap"><svg><use href="#dots"/></svg></button><svg class="c"><use href="#caret"/></svg></div>
    <div class="grp g2"><button aria-label="Ortho"><svg><use href="#ortho"/></svg></button><button class="lit" aria-label="Polar"><svg><use href="#polar"/></svg></button><svg class="c"><use href="#caret"/></svg><button aria-label="Isodraft"><svg><use href="#iso"/></svg></button><svg class="c"><use href="#caret"/></svg><button class="lit" aria-label="Tracking"><svg><use href="#angle"/></svg></button><button class="lit" aria-label="Object snap"><svg><use href="#osnap"/></svg></button><svg class="c"><use href="#caret"/></svg></div>
    <div class="grp g3"><button class="lit" aria-label="Annotation visibility"><svg><use href="#anno"/></svg><span class="ring"></span></button><button aria-label="Auto scale"><svg viewBox="0 0 16 16"><use href="#anno"/><path d="M12 0l-2 4h3l-2 4" fill="none" stroke="#eee"/></svg></button><button aria-label="Annotation scale"><svg><use href="#anno"/></svg></button><span>1" = 30'</span><svg class="c"><use href="#caret"/></svg></div>
    <div class="grp g4"><button aria-label="Workspace"><svg><use href="#gear"/></svg></button><svg class="c"><use href="#caret"/></svg></div>
    <div class="grp g5"><button aria-label="Monitor"><svg viewBox="0 0 16 16"><path d="M8 0v16M0 8h16" stroke="#ddd" stroke-width="1.500"/></svg></button></div>
    <div class="grp g6"><button aria-label="Detail"><svg><use href="#layers"/></svg></button><span>3.5</span></div>
    <div class="grp g7"><button aria-label="Isolate"><svg><use href="#shapes"/></svg></button></div>
    <div class="grp g7"><button aria-label="Hardware"><svg><use href="#hw"/></svg></button></div>
    <div class="grp g8"><button aria-label="Clean screen"><svg><use href="#full"/></svg></button><button aria-label="Customization"><svg viewBox="0 0 16 16"><path d="M0 2h16M0 8h16M0 14h16" stroke="#eee" stroke-width="2"/></svg></button></div>
  </div>
</footer>

<section class="dialog" role="dialog" aria-label="Profile Layout Tools">
  <div class="dhead"><h2>Profile Layout Tools - KINGSLEY DRIVE-Layout</h2><div class="dctl"><button aria-label="Pin"><svg viewBox="0 0 16 14"><path d="M2 12l4-4" stroke="#777" stroke-width="2"/><circle cx="8" cy="7" r="4.500" fill="#eee" stroke="#888"/><circle cx="10" cy="5" r="3.500" fill="#fff" stroke="#888"/></svg></button><button aria-label="Help"><svg viewBox="0 0 16 16"><path d="M5 6c0-5 6-4 6-1 0 2-3 2-3 5M8 12v2" fill="none" stroke="#44516c" stroke-width="3.500"/><path d="M5 6c0-5 6-4 6-1 0 2-3 2-3 5M8 12v2" fill="none" stroke="#fff" stroke-width="2"/></svg></button><button class="dclose" aria-label="Close"><svg viewBox="0 0 8 8"><path d="M1 1l6 6M7 1L1 7" stroke="#fff" stroke-width="2"/></svg></button></div></div>
  <div class="dtools">
    <button class="sel" aria-label="Draw tangents with curves"><svg><use href="#veec"/></svg><svg class="c"><use href="#caret"/></svg></button>
    <div class="dg"><button aria-label="Insert PVI"><svg viewBox="0 0 16 16"><path d="M1 6l6 8 6-8" fill="none" stroke="#444"/><path d="M7 9l2 5H5z" fill="#fff" stroke="#444"/><circle cx="12" cy="4" r="2.500" fill="#ffd98a" stroke="#e07a29" stroke-width="1.500"/></svg></button><button aria-label="Delete PVI"><svg viewBox="0 0 16 16"><path d="M1 1l5 8 6-8M2 5h8" fill="none" stroke="#444"/><path d="M9 9l6 6M15 9l-6 6" stroke="#cb2228" stroke-width="2.200"/></svg></button><button aria-label="Move PVI"><svg><use href="#veemove"/></svg></button></div>
    <button aria-label="Tangent"><svg><use href="#line"/></svg><svg class="c"><use href="#caret"/></svg></button><button aria-label="Vertical curve"><svg><use href="#arc"/></svg><svg class="c"><use href="#caret"/></svg></button><button aria-label="Convert"><svg><use href="#linec"/></svg></button><hr>
    <div class="dg"><button aria-label="Edit PVI"><svg viewBox="0 0 16 16"><path d="M1 1l5 8 6-8M2 5h8" fill="none" stroke="#444"/><path d="M7 15l1-3 5-6 2 2-5 6z" fill="#f1b13b" stroke="#a65"/></svg></button><button aria-label="Raise PVI"><svg viewBox="0 0 16 16"><path d="M1 3l6 7h2l6-7M8 0v16" fill="none" stroke="#444"/><path d="M8 6l2 5H6z" fill="#fff" stroke="#444"/><path d="M6 3l2-3 2 3zM6 13l2 3 2-3z" fill="#444"/></svg></button><button aria-label="Copy profile"><svg><use href="#wave"/></svg></button></div><hr>
    <button aria-label="Design point"><svg><use href="#tri"/></svg><svg class="c"><use href="#caret"/></svg></button>
    <div class="dg b"><button aria-label="Select"><svg><use href="#pick"/></svg></button><button aria-label="Sub-entity"><svg><use href="#split"/></svg></button><button aria-label="Delete entity"><svg><use href="#delx"/></svg></button><button aria-label="Parameters" class="off"><svg><use href="#panel"/></svg></button><button aria-label="Grid editor"><svg><use href="#table"/></svg></button><button aria-label="Panorama"><svg><use href="#panel"/></svg></button></div><hr>
    <button aria-label="Undo"><svg><use href="#undoo"/></svg></button><button aria-label="Redo"><svg class="flip"><use href="#undoo"/></svg></button>
  </div>
  <div class="dstat"><span>Current command: Draw Tangents with Curves</span><span>PVI based</span></div>
</section>
</body>
</html>
```
FILE: styles.css
```css
* { box-sizing: border-box; }
body { margin: 0; height: 100vh; min-height: 720px; display: flex; flex-direction: column; background: #080808; color: #e6e6e6; font: 11px/14px "Open Sans", "Noto Sans", sans-serif; position: relative; overflow: hidden; border-bottom: 3px solid #050505; }
button { background: none; border: 0; padding: 0; color: inherit; font: inherit; display: flex; align-items: center; justify-content: center; flex: none; white-space: nowrap; }
h1, h2 { margin: 0; font: inherit; }
svg { width: 16px; height: 16px; flex: none; }
svg.c { width: 8px; height: 8px; }
.defs { position: absolute; width: 0; height: 0; }
.flip { transform: scaleX(-1); }
input { font: inherit; border: 0; padding: 0; outline: 0; min-width: 0; }

/* title bar and menus */
.top { display: grid; grid-template-columns: 38px 1fr; grid-template-rows: 23px 19px; flex: none; background: #414141; }
.app { grid-row: 1 / 3; margin: 1px 0 4px 2px; background: linear-gradient(#c5c5c5, #8c8c8c); border: 1px solid #ddd; display: flex; flex-direction: column; justify-content: flex-start; color: #111; }
.app svg { width: 34px; height: 27px; }
.app b { font: bold 8px/8px "Liberation Sans", sans-serif; }
.titlebar { display: flex; background: linear-gradient(#787878, #505050); border-bottom: 1px solid #3b3b3b; min-width: 0; }
.quick { width: 209px; display: flex; align-items: center; padding-left: 9px; gap: 7px; }
.quick button:nth-child(-n+2) svg { height: 14px; }
.quick button:nth-child(8) { margin-left: -4px; }
.dim { color: #8f8f8f; }
.workspace { width: 167px; background: #414141; border: 1px solid #5c5c5c; justify-content: flex-start; gap: 3px; padding: 0 3px 0 2px; }
.workspace svg:first-child { width: 14px; height: 14px; }
.workspace span { flex: 1; text-align: left; }
.custom { width: 17px; border: 1px solid #4d4d4d; }
.custom svg { width: 9px; height: 11px; }
h1 { flex: 1; min-width: 278px; background: #fff; color: #222; display: flex; gap: 10px; align-items: center; justify-content: center; white-space: nowrap; }
.expand { width: 14px; }
.expand svg { width: 8px; height: 10px; }
.search { width: 168px; background: #515151; border: 1px solid #353535; color: #ddd; padding-left: 2px; }
.search::placeholder { color: #b1b1b1; font-style: italic; opacity: 1; }
.account { width: 237px; display: flex; align-items: center; padding: 0 2px 0 3px; gap: 8px; }
.account svg:not(.c) { width: 16px; height: 15px; }
.account button:nth-child(4) { gap: 2px; }
.sign { flex: 1; gap: 5px; justify-content: flex-start; margin-left: -2px; }
.sign span { flex: 1; text-align: left; }
.help { border-left: 1px solid #777; padding-left: 7px; gap: 4px; }
.winctl { width: 152px; background: #fff; display: flex; align-items: center; justify-content: space-between; padding: 0 17px 0 38px; }
.winctl svg, .docctl svg { width: 12px; height: 12px; }
.menubar { display: flex; background: linear-gradient(#7c7c7c, #474747); min-width: 0; }
.menus { flex: 1; display: flex; justify-content: space-between; padding: 0 0 0 14px; }
.docctl { display: flex; gap: 3px; width: 105px; justify-content: flex-end; padding-right: 3px; }

/* ribbon */
.rtabs { display: flex; height: 20px; flex: none; background: #505050; color: #c6c6c6; border-top: 1px solid #333; border-bottom: 1px solid #63884f; }
.rlist { flex: 1; display: flex; justify-content: space-between; padding: 0 10px 0 12px; }
.geo { width: 77px; border: 1px solid #3878a8; background: #42505d; color: #eee; }
.current { width: 174px; margin-left: 3px; background: #6a6f67; border: 1px solid #648750; border-bottom: 0; color: #f2f2f2; }
.rmin { width: 72px; }
.rmin svg { width: 24px; height: 10px; }
.ribbon { display: flex; height: 93px; flex: none; background: #5a5a5a; border-left: 3px solid #536f45; border-bottom: 2px solid #6d8f58; }
.panel { display: flex; flex-direction: column; border-right: 1px solid #3c3c3c; box-shadow: 1px 0 #686868; color: #eee; flex: none; }
.tools { display: grid; flex: 1; padding-top: 5px; align-items: start; }
.panel h2 { height: 18px; line-height: 14px; padding-bottom: 2px; display: flex; justify-content: center; align-items: center; gap: 4px; background: linear-gradient(#545454, #333); }
.panel h2 svg { width: 9px; height: 9px; }
.big { display: block; text-align: center; position: relative; }
.ic { display: block; width: 28px; height: 28px; margin: 2px auto 4px; position: relative; }
.ic svg { width: 28px; height: 28px; display: block; }
.ic .sub { position: absolute; width: 14px; height: 14px; right: -1px; bottom: 0; }
.ic .sub.up { top: 0; bottom: auto; right: 2px; }
.drop::after { content: ""; position: absolute; right: 3px; bottom: 11px; border: 3px solid transparent; border-top-color: #eee; border-bottom: 0; }
.small { display: flex; flex-direction: column; align-items: flex-start; margin-top: -1px; }
.small button { height: 22px; gap: 5px; }
.small svg { width: 14px; height: 14px; }
.p-labels { width: 127px; } .p-labels .tools { grid-template-columns: 62px 62px; }
.p-general { width: 151px; } .p-general .tools { grid-template-columns: 44px 1fr; column-gap: 6px; }
.p-modify { width: 206px; } .p-modify .tools { grid-template-columns: 70px 56px 78px; }
.p-view { width: 83px; } .p-view .tools { grid-template-columns: 80px; }
.p-analyze { width: 169px; } .p-analyze .tools { grid-template-columns: 78px 36px 53px; }
.p-notify { width: 74px; } .p-notify .tools { grid-template-columns: 73px; }
.p-launch { width: 245px; } .p-launch .tools { grid-template-columns: 146px 1fr; padding-left: 6px; }
.p-analyze .big, .p-modify .big { justify-self: center; width: 100%; }
.rest { flex: 1; background: linear-gradient(#5a5a5a, #393939 78%, #4f733b 92%, #679848); }

/* drawing tabs */
.ftabs { display: flex; height: 26px; flex: none; background: #333; padding: 3px 4px 0 20px; color: #a7a7a7; align-items: stretch; border-bottom: 3px solid #555; }
.ft { background: linear-gradient(#595959, #484848); border-radius: 12px 12px 0 0; width: 142px; }
.ft svg { width: 8px; height: 8px; color: #303030; margin-left: 9px; }
.ft.start { width: 117px; justify-content: flex-start; padding-left: 10px; }
.ft.active { background: linear-gradient(#8b8b8b, #606060); color: #fff; width: 143px; justify-content: flex-start; padding-left: 9px; }
.ft.hiddenname { flex: 1; justify-content: flex-end; padding-right: 6px; }
.ft.project { width: 164px; }
.ft.plus { width: 22px; margin: 1px 0 0 6px; border-radius: 9px 9px 2px 2px; }
.ft.plus svg { margin: 0; }
.more { width: 16px; margin-left: 92px; }
.more svg { width: 9px; height: 11px; }

/* toolspace */
main { flex: 1; display: flex; min-height: 0; background: #555; }
.space { width: 316px; display: flex; flex: none; }
.sbody { flex: 1; display: flex; flex-direction: column; min-width: 0; padding: 1px 0 5px 1px; }
.sbody h2 { height: 20px; line-height: 20px; padding-left: 14px; background: #4c4c4c; color: #eee; }
.stools { height: 30px; display: flex; align-items: center; padding: 0 6px 0 3px; gap: 11px; }
.stools button:first-child { margin-right: auto; }
.stools svg { width: 15px; height: 15px; }
.pick { display: grid; height: 19px; align-items: center; flex: none; }
.pick select { grid-area: 1 / 1; height: 19px; appearance: none; border: 1px solid #aaa; border-radius: 0; background: #dedede; color: #222; font: inherit; padding: 0 0 0 2px; }
.pick svg { grid-area: 1 / 1; justify-self: end; width: 10px; height: 10px; margin-right: 3px; pointer-events: none; }
.treebox { flex: 1; display: flex; background: #fff; margin: 3px 0 7px; padding-right: 2px; color: #1d1d1d; min-height: 0; border-right: 1px solid #aaa; }
.tree { flex: 1; list-style: none; margin: 0; padding: 0 0 0 9px; display: grid; grid-auto-rows: 1fr; }
.tree li { display: flex; align-items: center; padding-left: 18px; position: relative; min-height: 0; }
.tree li.root { padding-left: 0; }
.tree li::before { content: ""; position: absolute; left: 4px; top: 0; bottom: 0; border-left: 1px dotted #999; }
.tree li::after { content: ""; position: absolute; left: 22px; top: 0; bottom: 0; border-left: 1px dotted #999; }
.tree li.root::after { display: none; }
.tree li:nth-child(n+16)::before { display: none; }
.tree svg { width: 16px; height: 16px; margin-right: 6px; color: #444; }
.ex, .tree i { width: 9px; height: 9px; margin-right: 6px; }
.ex { z-index: 1; border: 1px solid #999; background: linear-gradient(#777, #777) center / 5px 1px no-repeat, linear-gradient(#777, #777) center / 1px 5px no-repeat, #eee; }
.ex.minus { background: linear-gradient(#777, #777) center / 5px 1px no-repeat, #eee; }
.ex.dot { background: radial-gradient(#111 2px, #eee 3px); }
.tree i { border-bottom: 1px dotted #999; transform: translate(5px, -4px); }
.scroll { width: 15px; background: #f0f0f0; display: flex; flex-direction: column; align-items: center; padding: 4px 0; gap: 3px; }
.scroll svg { width: 8px; height: 8px; margin: 0; }
.scroll span { width: 100%; height: 251px; background: #c9c9c9; margin-bottom: auto; }
.preview { height: 87px; flex: none; border: 1px solid #929292; background: #5a5a5a; }
.stabs { width: 20px; padding: 23px 1px 0 0; display: flex; flex-direction: column; }
.stabs button { height: 114px; writing-mode: vertical-rl; transform: rotate(180deg); background: #4a4a4a; color: #aaa; border: 1px solid #353535; border-radius: 4px 0 0 4px; }
.stabs .on { background: #5a5a5a; color: #e8e8e8; }

/* drawing area */
.canvas { flex: 1; min-width: 0; margin: 0 4px 0 2px; background: #212430; position: relative; overflow: hidden; }
.drawing { width: 100%; height: 100%; display: block; }
.vp { font-size: 11px; fill: #ddd; }
.title { font: 82px "Liberation Serif", serif; fill: #fff; }
.label { font: 29px Lato, sans-serif; fill: #e60d12; text-anchor: middle; }
.cube { font: bold 10px "Liberation Sans", sans-serif; fill: #42464f; text-anchor: middle; }
.compass { font: bold 14px "Liberation Sans", sans-serif; fill: #b4b6bb; text-anchor: middle; }
.wcs { font: 10px "Liberation Sans", sans-serif; fill: #464954; text-anchor: middle; }
.cmd { position: absolute; left: 37.500%; bottom: 1px; width: 234px; height: 24px; margin: 0; display: flex; align-items: center; background: #4b4b4f; }
.grip { width: 5px; height: 16px; margin: 0 6px 0 3px; border-left: 2px dotted #999; border-right: 2px dotted #999; }
.cmd button { width: 20px; justify-content: flex-start; color: #ddd; }
.cmd button svg { width: 8px; height: 8px; }
.cmd button svg.wr { width: 13px; height: 13px; }
.entry { flex: 1; align-self: stretch; display: flex; align-items: center; background: #b9bbbf; color: #444; padding: 0 3px; gap: 3px; min-width: 0; margin-left: -4px; }
.prompt { width: 14px; height: 14px; }
.cmd input { flex: 1; background: none; color: #333; font: italic 11px "DejaVu Sans Mono", monospace; padding-left: 3px; }
.cmd input::placeholder { color: #777; opacity: 1; }
.upc { transform: rotate(180deg); color: #111; }
.side { width: 24px; flex: none; margin-right: 1px; border: 1px solid #353535; border-bottom: 0; background: #555; display: flex; flex-direction: column; align-items: center; overflow: hidden; margin-bottom: -10px; }
.side svg { width: 15px; flex: 1 1 0; min-height: 0; padding: 2px 0; }
.side hr { width: 18px; height: 2px; margin: 3px 0 2px; border: 0; background: #eee; flex: none; }
.grip2 { width: 14px; height: 5px; margin: 2px 0 3px; border-top: 2px dotted #333; border-bottom: 2px dotted #333; flex: none; }

/* status bar */
footer { position: relative; height: 25px; flex: none; display: flex; justify-content: space-between; background: #3a3a3a; border-top: 1px solid #666; }
.models { display: flex; height: 16px; padding-left: 12px; gap: 3px; color: #aaa; }
.models button { background: #4c4c4c; border-radius: 0 0 9px 9px; width: 58px; }
.models .on { background: #777; color: #fff; font-weight: bold; width: 54px; }
.models button:last-child { width: 24px; }
.models svg { width: 8px; height: 8px; }
.status { width: 803px; margin-right: 1px; display: flex; background: #4a4a4a; border: 1px solid #777; align-items: stretch; }
.coords { width: 193px; text-align: right; line-height: 23px; }
.model { width: 43px; border: 1px solid #6b6b6b; border-width: 0 1px; margin-left: 4px; }
.grp { display: flex; align-items: center; border-right: 1px solid #6b6b6b; flex: none; }
.grp svg:not(.c) { width: 15px; height: 15px; }
.lit { background: #5687c2; width: 21px; height: 21px; position: relative; }
.ring { position: absolute; right: 1px; top: 1px; width: 6px; height: 6px; border: 1px solid #fff; border-radius: 50%; }
.g1 { width: 67px; padding: 0 4px 0 7px; justify-content: space-between; }
.g2 { width: 157px; padding: 0 2px 0 4px; justify-content: space-between; }
.g3 { width: 129px; padding: 0 2px 0 3px; justify-content: space-between; }
.g4 { width: 40px; padding: 0 4px 0 5px; justify-content: space-between; }
.g5 { width: 22px; justify-content: center; }
.g6 { width: 57px; padding: 0 9px 0 7px; justify-content: space-between; }
.g7 { width: 23px; justify-content: center; }
.g8 { flex: 1; border: 0; justify-content: space-between; padding: 0 3px 0 5px; }

/* floating layout tools */
.dialog { position: absolute; left: 360px; top: 152px; width: 591px; height: 78px; background: #d5deed; border: 1px solid #eef3fa; color: #1d1d1d; padding: 0 7px 6px 6px; display: flex; flex-direction: column; }
.dhead { display: flex; height: 27px; margin: 0 -7px 0 -6px; padding-left: 6px; background: linear-gradient(#b9cbe1, #d3deed); color: #999fa9; }
.dhead h2 { flex: 1; padding-top: 9px; }
.dctl { display: flex; height: 16px; }
.dctl button { width: 23px; height: 16px; border: 1px solid #8094b0; background: linear-gradient(#d7e2f0, #9bb3d2); }
.dctl svg { width: 14px; height: 13px; }
.dctl .dclose { width: 35px; background: linear-gradient(#d99085, #b92b1e); }
.dctl .dclose svg { width: 10px; height: 9px; }
.dtools { height: 25px; display: flex; align-items: center; justify-content: space-between; background: #f1f1f1; padding: 0 3px; color: #444; }
.dtools button { gap: 5px; }
.dtools .c { width: 10px; height: 10px; color: #000; }
.sel { width: 35px; height: 19px; border: 1px solid #4d86c6; background: #cfe2f7; }
.dg { display: flex; gap: 7px; }
.dg.b { gap: 11px; }
.dtools hr { width: 1px; height: 22px; margin: 0; border: 0; background: #aaa; }
.dtools .off { color: #aaa; }
.dstat { flex: 1; margin-top: 1px; display: flex; background: #f0f0f0; line-height: 18px; }
.dstat span:first-child { width: 389px; padding-left: 2px; border-right: 1px solid #ddd; }
.dstat span + span { padding-left: 5px; }
```
